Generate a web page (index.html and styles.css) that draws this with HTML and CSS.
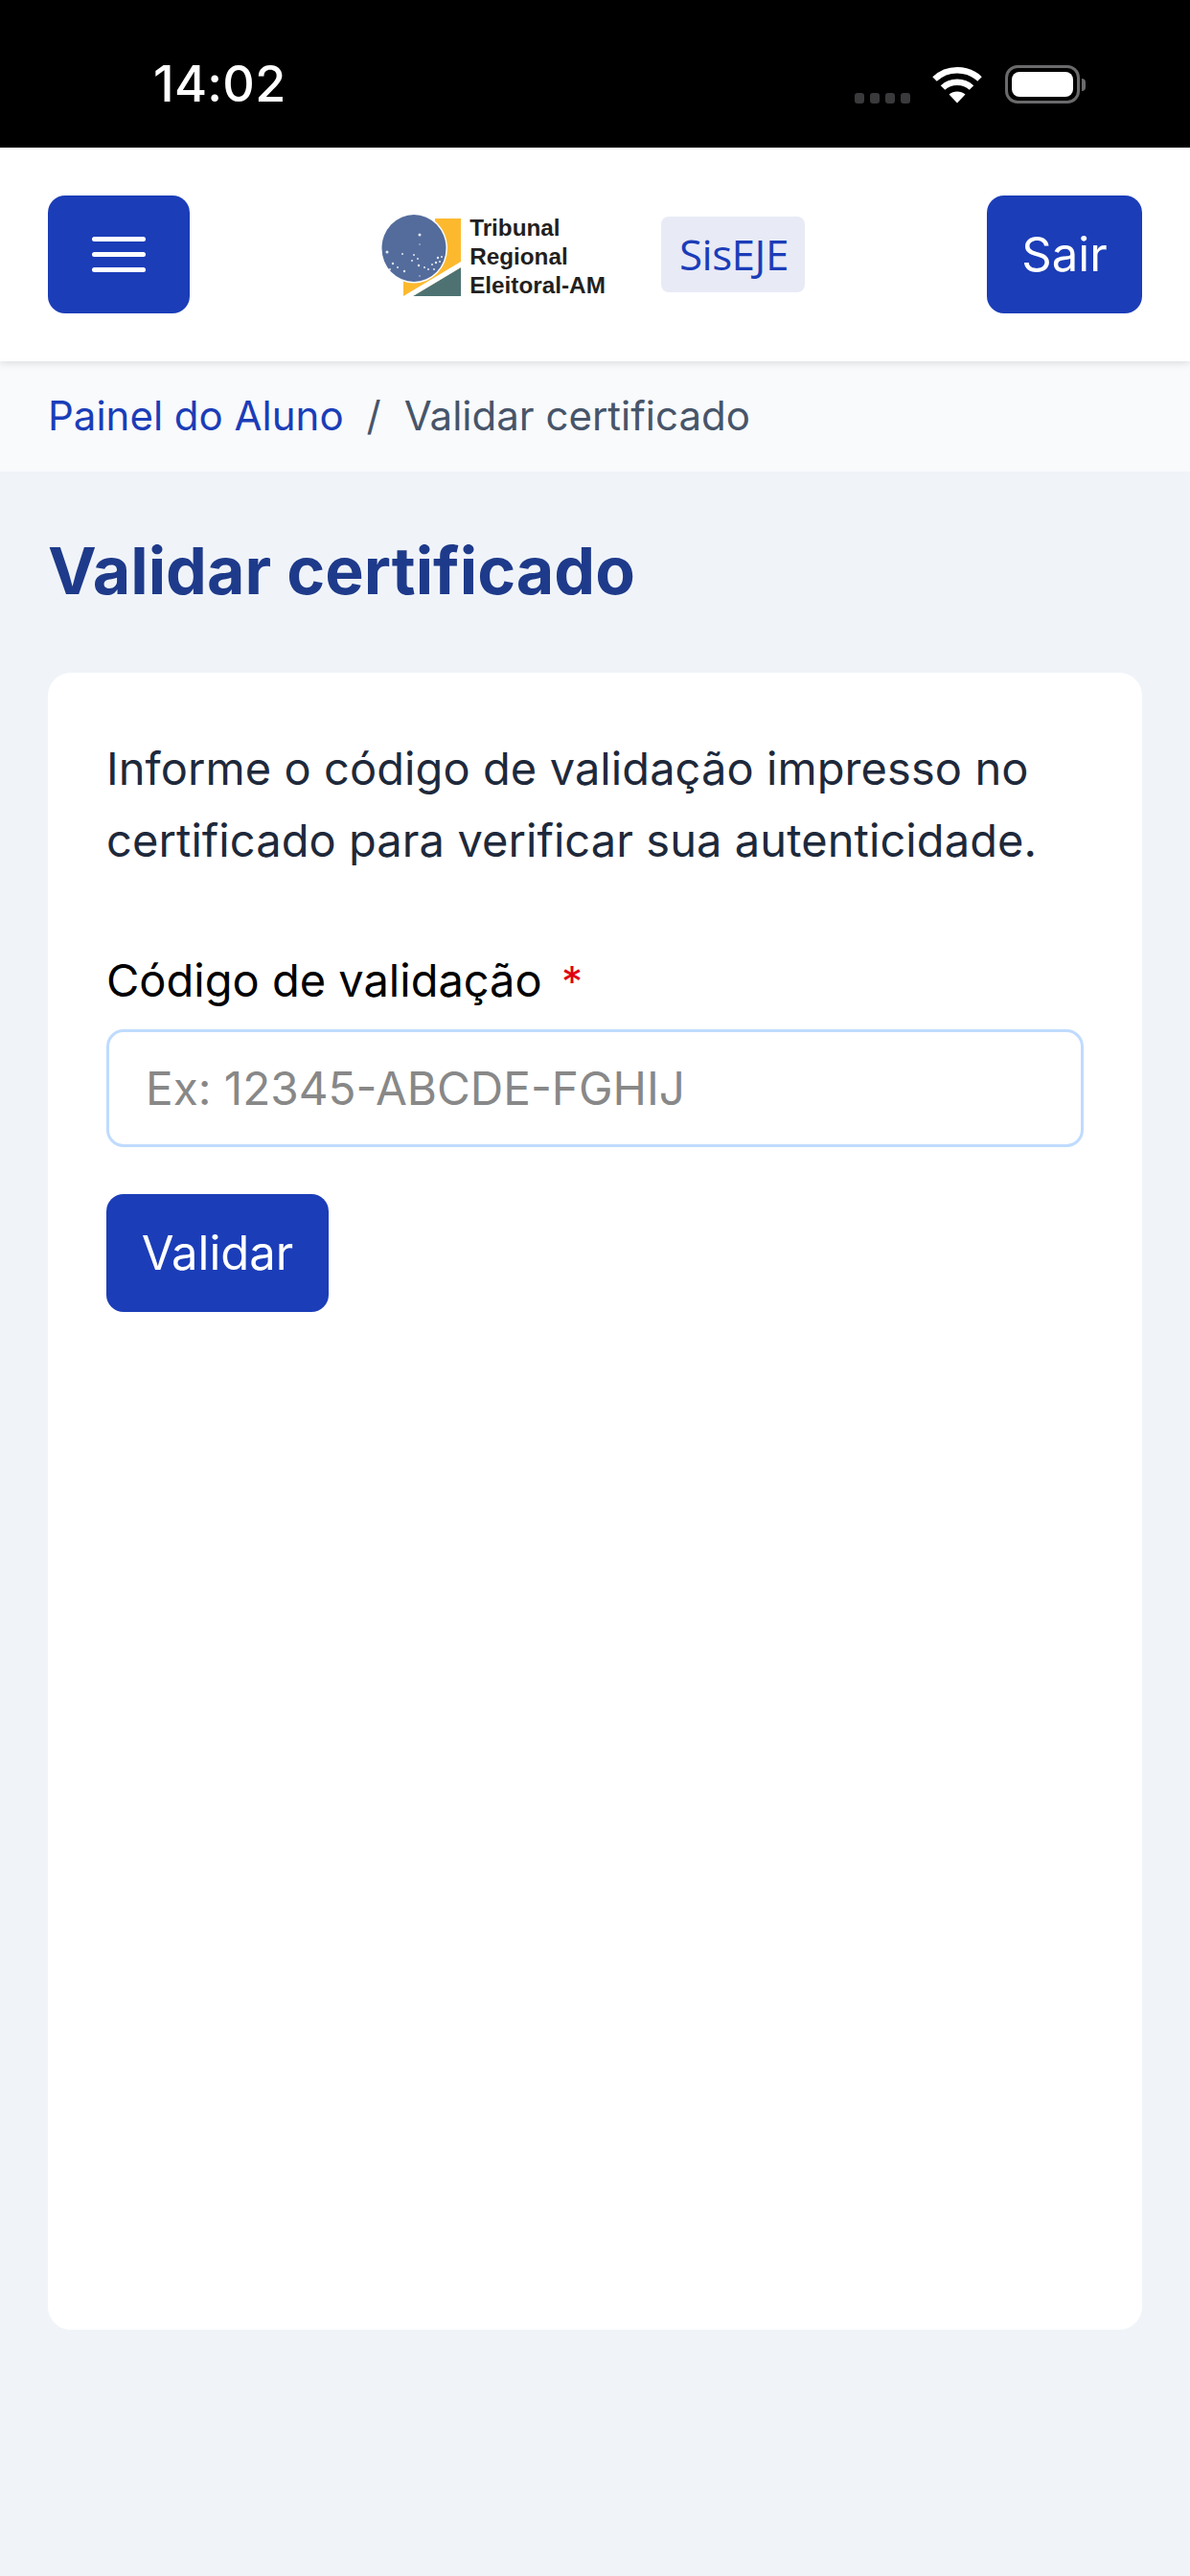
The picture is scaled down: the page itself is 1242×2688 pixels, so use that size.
FILE: index.html
```html
<!DOCTYPE html>
<html lang="pt-BR">
<head>
    <meta charset="UTF-8">
    <meta name="viewport" content="width=device-width, initial-scale=1.0">
    <title>Validar certificado</title>
    <link rel="stylesheet" href="styles.css">
</head>
<body>
    <div class="status-bar">
        <span class="status-time">14:02</span>
        <div class="status-icons">
            <div class="signal-dots">
                <span class="signal-dot"></span>
                <span class="signal-dot"></span>
                <span class="signal-dot"></span>
                <span class="signal-dot"></span>
            </div>
            <svg class="wifi-icon" width="52" height="40" viewBox="0 0 52 40">
                <path d="M2.5 14.5C15.5 2 36.500 2 49.500 14.500" fill="none" stroke="#fff" stroke-width="6.500"/>
                <path d="M11 23.500C19 15.800 33 15.800 41 23.500" fill="none" stroke="#fff" stroke-width="6.500"/>
                <path d="M17.500 30.500C22 26.500 30 26.500 34.500 30.500L26 39.500Z" fill="#fff"/>
            </svg>
            <div class="battery">
                <div class="battery-level"></div>
            </div>
            <div class="battery-cap"></div>
        </div>
    </div>

    <header class="topbar">
        <button class="btn btn-menu" aria-label="Menu">
            <span class="menu-line"></span>
            <span class="menu-line"></span>
            <span class="menu-line"></span>
        </button>
        <div class="brand">
            <svg class="brand-mark" width="84" height="87" viewBox="0 0 84 87">
                <path d="M57 6H84V57L34 87H24V68H45L57 50Z" fill="#fdb92e"/>
                <path d="M34 87L84 57V87Z" fill="#4e7272"/>
                <path d="M24 87L84 51V57L34 87Z" fill="#fff"/>
                <ellipse cx="35" cy="37" rx="35" ry="36.500" fill="#fff"/>
                <ellipse cx="35" cy="37" rx="33.500" ry="35" fill="#536c9c"/>
                <g fill="#e4e9f2">
                    <circle cx="41" cy="23" r="1.500"/>
                    <circle cx="7" cy="41" r="1.500"/>
                    <circle cx="23" cy="43" r="1"/>
                    <circle cx="35" cy="44" r="1"/>
                    <circle cx="39" cy="48" r="1"/>
                    <circle cx="33" cy="50" r="1"/>
                    <circle cx="40" cy="55" r="1.200"/>
                    <circle cx="13" cy="53" r="1.200"/>
                    <circle cx="18" cy="57" r="1"/>
                    <circle cx="10" cy="59" r="1"/>
                    <circle cx="25" cy="61" r="1.200"/>
                    <circle cx="46" cy="57" r="1"/>
                    <circle cx="50" cy="59" r="1"/>
                    <circle cx="54" cy="54" r="1"/>
                    <circle cx="58" cy="52" r="1.200"/>
                    <circle cx="60" cy="47" r="1.200"/>
                    <circle cx="62" cy="51" r="1"/>
                    <circle cx="64" cy="46" r="1"/>
                    <circle cx="56" cy="59" r="1"/>
                    <circle cx="41" cy="33" r="0.700"/>
                    <circle cx="41" cy="66" r="0.700"/>
                </g>
            </svg>
            <div class="brand-name">Tribunal<br>Regional<br>Eleitoral-AM</div>
            <span class="brand-badge">SisEJE</span>
        </div>
        <button class="btn btn-logout">Sair</button>
    </header>

    <nav class="breadcrumb">
        <a class="breadcrumb-link" href="#">Painel do Aluno</a>
        <span class="breadcrumb-sep">/</span>
        <span class="breadcrumb-current">Validar certificado</span>
    </nav>

    <main class="content">
        <h1 class="page-title">Validar certificado</h1>
        <section class="card">
            <p class="card-text">Informe o código de validação impresso no certificado para verificar sua autenticidade.</p>
            <form class="form">
                <label class="form-label" for="codigo">Código de validação <span class="required">*</span></label>
                <input class="form-input" id="codigo" type="text" placeholder="Ex: 12345-ABCDE-FGHIJ">
                <button class="btn btn-submit" type="button">Validar</button>
            </form>
        </section>
    </main>
</body>
</html>
```

FILE: styles.css
```css
* {
    box-sizing: border-box;
}
body {
    font-family: 'Inter', 'Liberation Sans', sans-serif;
    background: #f0f4f9;
    margin: 0;
    height: 2688px;
    overflow: hidden;
    display: flex;
    flex-direction: column;
}

/* status bar */
.status-bar {
    height: 154px;
    background: #000000;
    color: #ffffff;
    display: flex;
    justify-content: space-between;
    padding: 0 109px 0 160px;
    flex-shrink: 0;
}
.status-time {
    font-size: 52px;
    font-weight: 500;
    line-height: 50px;
    margin-top: 63px;
    letter-spacing: 0.300px;
}
.status-icons {
    display: flex;
    align-items: flex-start;
    padding-top: 68px;
}
.signal-dots {
    display: flex;
    gap: 6px;
    margin-top: 29px;
    margin-right: 23px;
}
.signal-dot {
    width: 10px;
    height: 11px;
    border-radius: 3px;
    background: #3a3a3c;
}
.wifi-icon {
    margin-right: 24px;
}
.battery {
    width: 78px;
    height: 40px;
    border: 3px solid #6a6a6c;
    border-radius: 13px;
    padding: 4px;
}
.battery-level {
    height: 100%;
    background: #ffffff;
    border-radius: 8px;
}
.battery-cap {
    width: 4px;
    height: 13px;
    margin: 14px 0 0 2px;
    background: #6a6a6c;
    border-radius: 0 4px 4px 0;
}

/* header */
.topbar {
    height: 223px;
    background: #ffffff;
    display: flex;
    justify-content: space-between;
    align-items: center;
    padding: 0 50px;
    box-shadow: 0 2px 8px rgba(0, 0, 0, 0.12);
    position: relative;
    flex-shrink: 0;
}
.btn {
    background: #1b3db8;
    color: #ffffff;
    border: none;
    border-radius: 18px;
    height: 123px;
    font-family: inherit;
    font-size: 49px;
    cursor: pointer;
}
.btn-menu {
    width: 148px;
    display: flex;
    flex-direction: column;
    justify-content: center;
    align-items: center;
    gap: 11px;
}
.menu-line {
    width: 56px;
    height: 5px;
    border-radius: 3px;
    background: #ffffff;
}
.btn-logout {
    width: 162px;
}
.brand {
    display: flex;
    align-items: center;
    padding-left: 9px;
}
.brand-mark {
    flex-shrink: 0;
}
.brand-name {
    font-family: 'Liberation Sans', Arial, sans-serif;
    font-weight: 700;
    font-size: 24.300px;
    line-height: 30px;
    color: #231f20;
    margin-left: 9px;
    margin-top: 5px;
}
.brand-badge {
    font-family: 'Open Sans', sans-serif;
    font-size: 44px;
    letter-spacing: -0.500px;
    line-height: 79px;
    height: 79px;
    width: 150px;
    text-align: center;
    color: #1b3db8;
    background: #e8eaf6;
    border-radius: 8px;
    margin-left: 58px;
    padding-left: 2px;
}

/* breadcrumb */
.breadcrumb {
    height: 115px;
    background: #f8fafc;
    display: flex;
    align-items: center;
    gap: 24px;
    padding: 0 50px 2px;
    font-size: 42px;
    flex-shrink: 0;
}
.breadcrumb-link {
    color: #1b3db8;
    text-decoration: none;
}
.breadcrumb-sep,
.breadcrumb-current {
    color: #475569;
}

/* content */
.content {
    flex: 1;
    padding: 62px 50px 257px;
    display: flex;
    flex-direction: column;
}
.page-title {
    font-size: 68px;
    font-weight: 700;
    line-height: 82px;
    color: #1e3a8a;
    margin: 0 0 66px;
}
.card {
    flex: 1;
    background: #ffffff;
    border-radius: 24px;
    padding: 62px 61px;
}
.card-text {
    font-size: 47px;
    letter-spacing: 0.080px;
    line-height: 75px;
    color: #1e293b;
    margin: 0 0 81px;
}
.form {
    display: flex;
    flex-direction: column;
    align-items: flex-start;
}
.form-label {
    font-size: 47px;
    line-height: 56px;
    color: #000000;
    margin-bottom: 22px;
}
.required {
    color: #e0000f;
    font-size: 44px;
    margin-left: 7px;
}
.form-input {
    width: 100%;
    height: 123px;
    border: 3px solid #bfdbfe;
    border-radius: 18px;
    padding: 0 38px;
    font-family: inherit;
    font-size: 47.700px;
    outline: none;
}
.form-input::placeholder {
    color: #888888;
    opacity: 1;
}
.btn-submit {
    width: 232px;
    margin-top: 49px;
}
```
